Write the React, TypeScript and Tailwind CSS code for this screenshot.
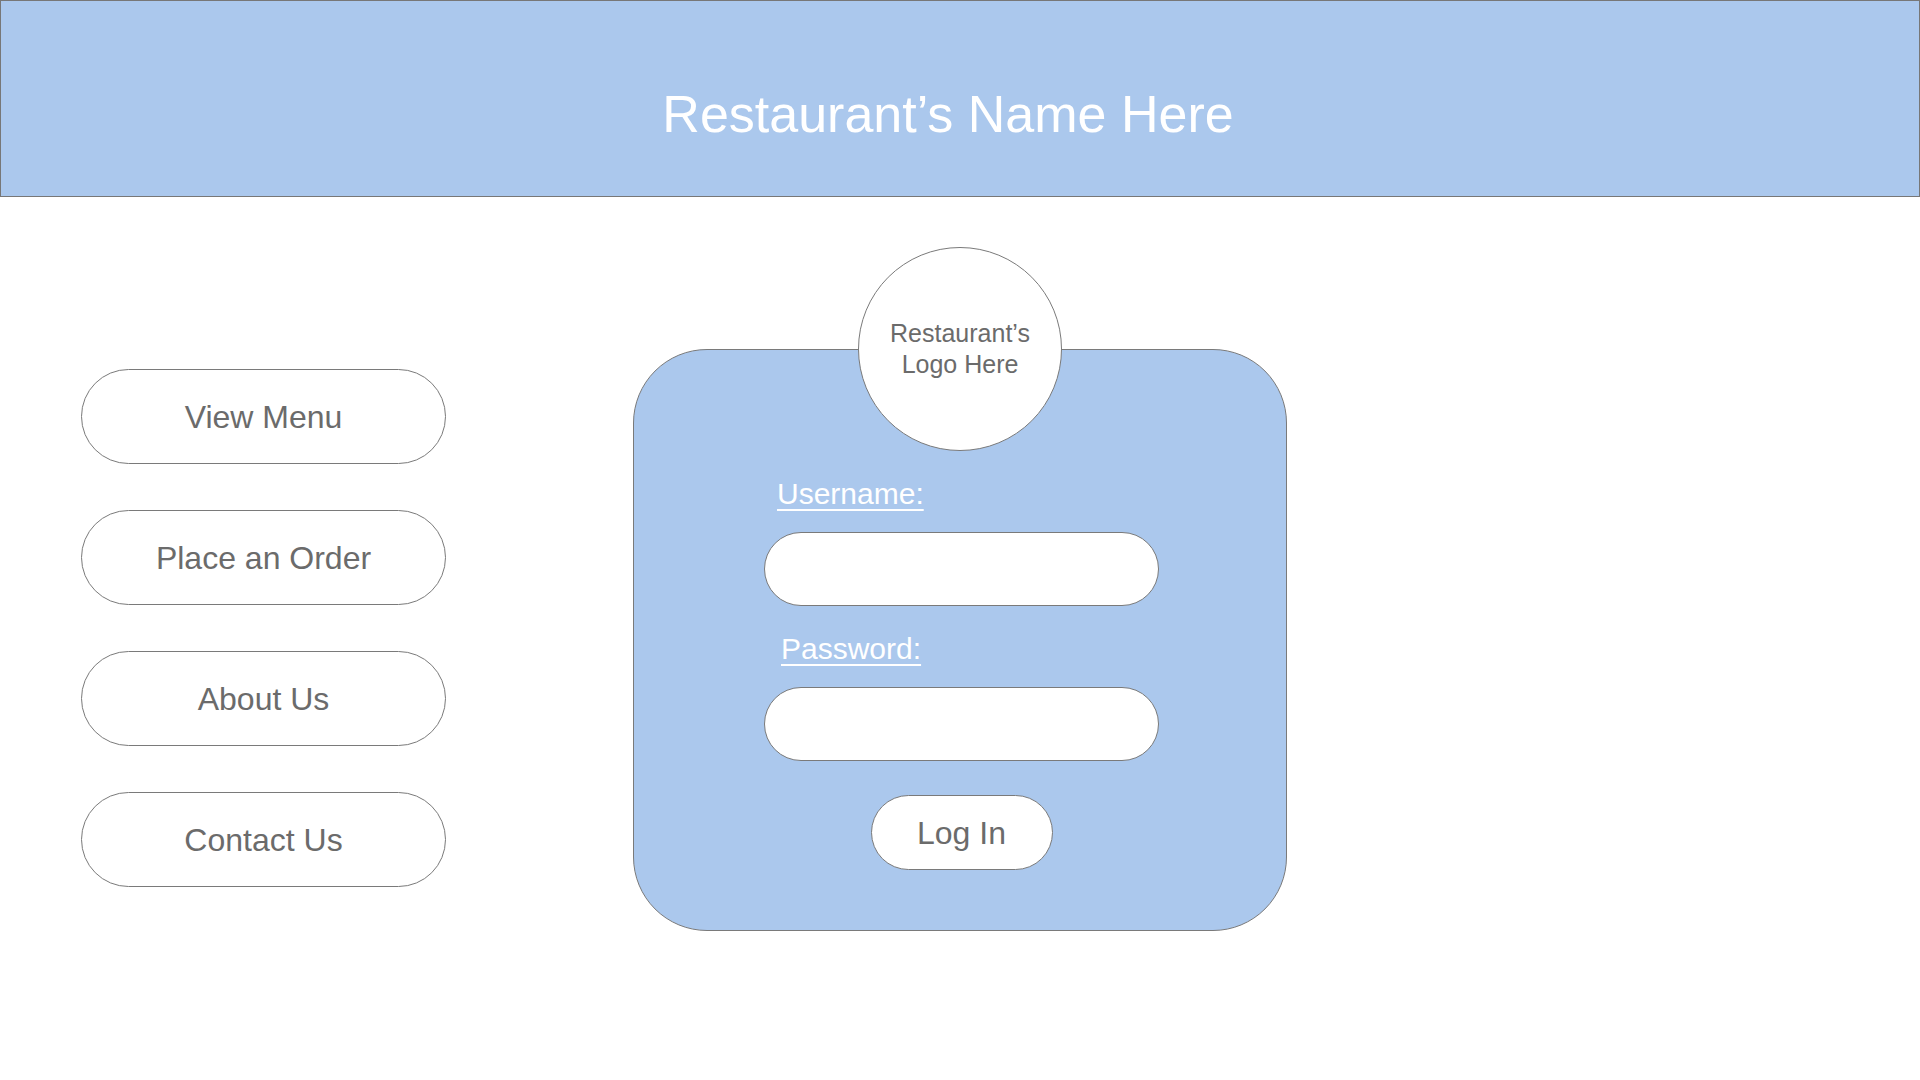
const navItems = ["View Menu", "Place an Order", "About Us", "Contact Us"];

function NavButton({ label }: { label: string }) {
  return (
    <button className="flex h-[95px] w-[365px] items-center justify-center rounded-full border border-[#7a7a7a] bg-white text-[32px] text-[#6b6b6b]">
      {label}
    </button>
  );
}

function Field({ label, indent }: { label: string; indent: string }) {
  return (
    <div className="flex flex-col">
      <span
        className={`${indent} self-start text-[30px] leading-[36px] text-white underline decoration-2 underline-offset-[5px]`}
      >
        {label}
      </span>
      <input className="mt-[20px] h-[74px] w-[395px] rounded-full border border-[#7a7a7a] bg-white px-8 text-[26px] outline-none" />
    </div>
  );
}

export default function App() {
  return (
    <div className="min-h-screen w-full bg-white font-['Liberation_Sans',Arial,sans-serif]">
      <header className="h-[197px] border border-[#777777] bg-[#abc8ed] pt-[87px] pr-6 text-center">
        <h1 className="text-[52px] leading-none text-white">Restaurant’s Name Here</h1>
      </header>

      <main className="flex items-start pl-[81px]">
        <nav className="mt-[172px] flex flex-col gap-[46px]">
          {navItems.map((item) => (
            <NavButton key={item} label={item} />
          ))}
        </nav>

        <section className="ml-[187px] mt-[50px] flex flex-col items-center">
          <div className="relative z-10 -mb-[102px] flex h-[204px] w-[204px] items-center justify-center rounded-full border border-[#7a7a7a] bg-white text-center text-[25px] leading-[31px] text-[#6b6b6b]">
            Restaurant’s
            <br />
            Logo Here
          </div>
          <div className="flex h-[582px] w-[654px] flex-col items-center rounded-[74px] border border-[#7a7a7a] bg-[#abc8ed] pl-[3px] pt-[126px]">
            <Field label="Username:" indent="ml-[13px]" />
            <div className="mt-[25px]">
              <Field label="Password:" indent="ml-[17px]" />
            </div>
            <button className="mt-[34px] flex h-[75px] w-[182px] items-center justify-center rounded-full border border-[#7a7a7a] bg-white text-[32px] text-[#6b6b6b]">
              Log In
            </button>
          </div>
        </section>
      </main>
    </div>
  );
}
